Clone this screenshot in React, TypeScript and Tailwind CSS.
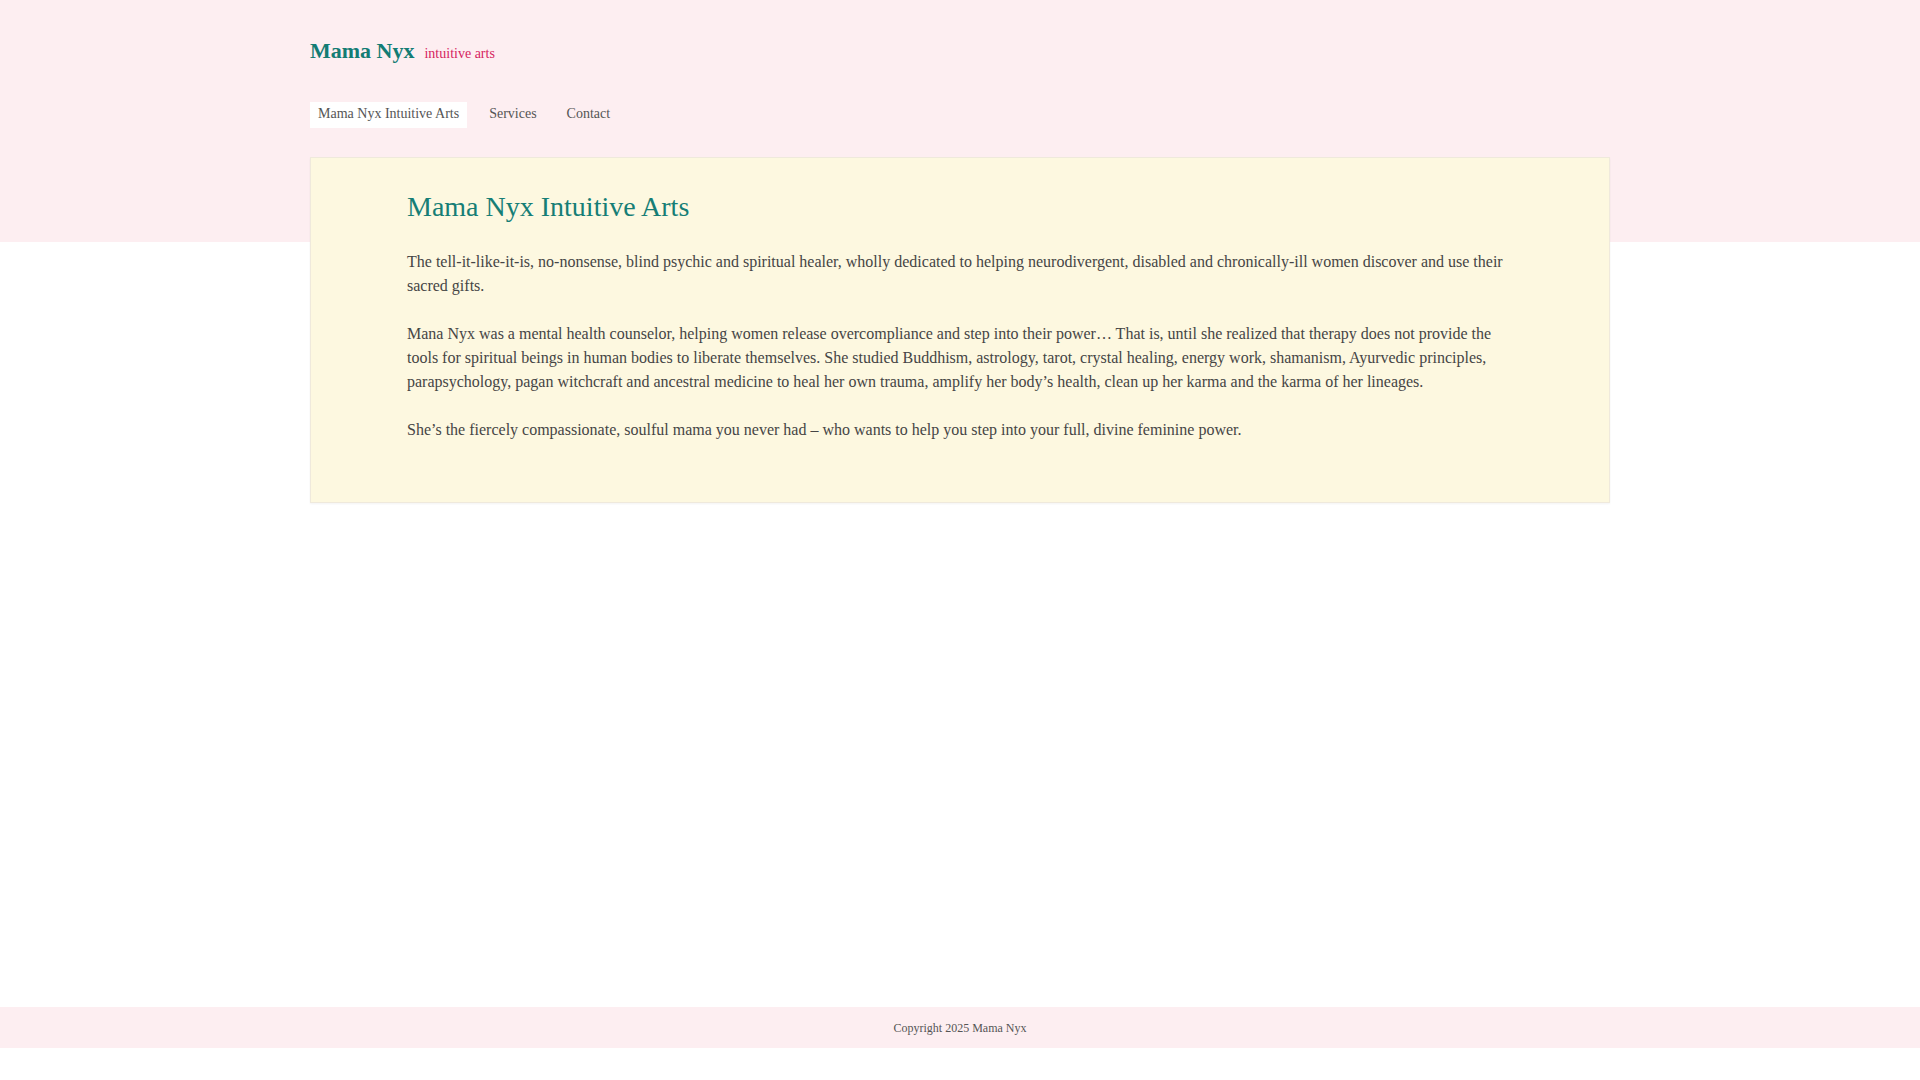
import React from "react";

const serif = { fontFamily: '"Liberation Serif", "Times New Roman", serif' };

export default function App() {
  return (
    <div style={serif} className="w-full bg-white text-[#444]">
      <div className="min-h-[1007px] flex flex-col">
        <header className="bg-[#fdeef1] h-[242px]">
          <div className="mx-auto w-[1300px] pt-[37px]">
            <div className="flex items-baseline leading-[28px]">
              <span className="text-[22px] font-bold text-[#137c74]">Mama Nyx</span>
              <span className="ml-[10px] text-[14px] text-[#d6245f]">intuitive arts</span>
            </div>
            <nav className="mt-[34px] flex gap-[14px] text-[14px] leading-[18px] text-[#555]">
              <a className="bg-white px-2 pt-[3px] pb-[5px]">Mama Nyx Intuitive Arts</a>
              <a className="px-2 pt-[3px] pb-[5px]">Services</a>
              <a className="px-2 pt-[3px] pb-[5px]">Contact</a>
            </nav>
          </div>
        </header>
        <main className="mx-auto w-[1300px] -mt-[85px]">
          <article className="bg-[#fdf8e0] border border-[#efe9dc] shadow-[0_1px_2px_rgba(0,0,0,0.05)] px-24 pt-8 pb-[60px]">
            <h1 className="text-[28px] leading-[1.2] text-[#167e76] mb-[26px]">
              Mama Nyx Intuitive Arts
            </h1>
            <div className="text-[16px] leading-[24px] text-[#454545] space-y-6">
              <p>
                The tell-it-like-it-is, no-nonsense, blind psychic and spiritual healer, wholly dedicated to helping neurodivergent, disabled and chronically-ill women discover and use their sacred gifts.
              </p>
              <p>
                Mana Nyx was a mental health counselor, helping women release overcompliance and step into their power… That is, until she realized that therapy does not provide the tools for spiritual beings in human bodies to liberate themselves. She studied Buddhism, astrology, tarot, crystal healing, energy work, shamanism, Ayurvedic principles, parapsychology, pagan witchcraft and ancestral medicine to heal her own trauma, amplify her body’s health, clean up her karma and the karma of her lineages.
              </p>
              <p>
                She’s the fiercely compassionate, soulful mama you never had – who wants to help you step into your full, divine feminine power.
              </p>
            </div>
          </article>
        </main>
      </div>
      <footer className="bg-[#fdeef1] h-[41px] flex items-center justify-center text-[12px] text-[#555]">
        Copyright 2025 Mama Nyx
      </footer>
      <div className="h-[32px]" />
    </div>
  );
}
